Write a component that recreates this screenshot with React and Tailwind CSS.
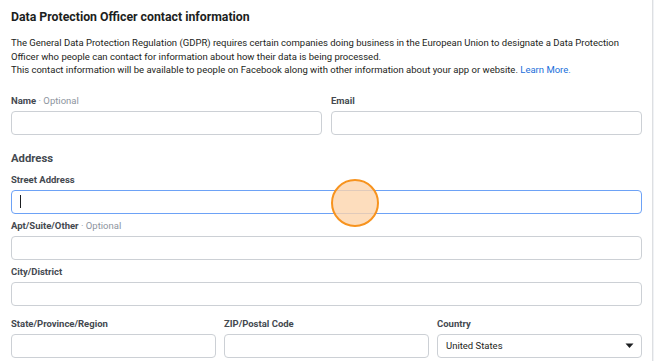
import React from "react";

function Label({ text, optional }) {
  return (
    <div className="text-[9.5px] leading-[13px] font-bold text-[#444950] mb-[4px]">
      {text}
      {optional && <span className="font-normal text-[#8d949e]"> · Optional</span>}
    </div>
  );
}

function Input({ focused, children }) {
  return (
    <div
      className={
        "h-[24px] rounded-[4px] border bg-white flex items-center px-[8px] " +
        (focused ? "border-[#6da2f6]" : "border-[#ccd0d5]")
      }
    >
      {children}
    </div>
  );
}

export default function App() {
  return (
    <div className="w-[654px] h-[361px] overflow-hidden bg-[#f0f2f5] font-['Roboto',sans-serif]">
      <div className="relative w-[653px] h-full bg-white border-r border-[#dddfe2] pl-[11px] pr-[10px] pt-[9px]">
        {/* Header */}
        <h2 className="text-[12.3px] leading-[17px] font-bold text-[#1c1e21]">
          Data Protection Officer contact information
        </h2>
        <p className="mt-[10px] text-[9.5px] leading-[13.5px] text-[#1c1e21]">
          The General Data Protection Regulation (GDPR) requires certain companies doing business in the European Union to designate a Data Protection
          Officer who people can contact for information about how their data is being processed.
          <br />
          This contact information will be available to people on Facebook along with other information about your app or website.{" "}
          <span className="text-[#216fdb]">Learn More.</span>
        </p>

        {/* Name / Email */}
        <div className="mt-[17px] grid grid-cols-2 gap-[9px]">
          <div>
            <Label text="Name" optional />
            <Input />
          </div>
          <div>
            <Label text="Email" />
            <Input />
          </div>
        </div>

        {/* Address */}
        <div className="mt-[16px] text-[11.3px] leading-[15px] font-bold text-[#444950]">Address</div>

        <div className="mt-[7px]">
          <Label text="Street Address" />
          <Input focused>
            <span className="w-px h-[13px] bg-[#1c1e21]" />
          </Input>
        </div>

        <div className="mt-[5px]">
          <Label text="Apt/Suite/Other" optional />
          <Input />
        </div>

        <div className="mt-[5px]">
          <Label text="City/District" />
          <Input />
        </div>

        <div className="mt-[11.5px] grid grid-cols-3 gap-[8px]">
          <div>
            <Label text="State/Province/Region" />
            <Input />
          </div>
          <div>
            <Label text="ZIP/Postal Code" />
            <Input />
          </div>
          <div>
            <Label text="Country" />
            <Input>
              <span className="flex-1 text-[9.5px] text-[#1c1e21]">United States</span>
              <svg width="9" height="6" viewBox="0 0 9 6" className="mr-[-1px]">
                <path d="M0.5 0.5 L8.5 0.5 L4.5 5 Z" fill="#1c1e21" />
              </svg>
            </Input>
          </div>
        </div>

        {/* click indicator */}
        <div className="absolute left-[331px] top-[179px] w-[48px] h-[48px] rounded-full bg-[#fdd5ac]/80 border-2 border-[#f7931e]" />
      </div>
    </div>
  );
}
